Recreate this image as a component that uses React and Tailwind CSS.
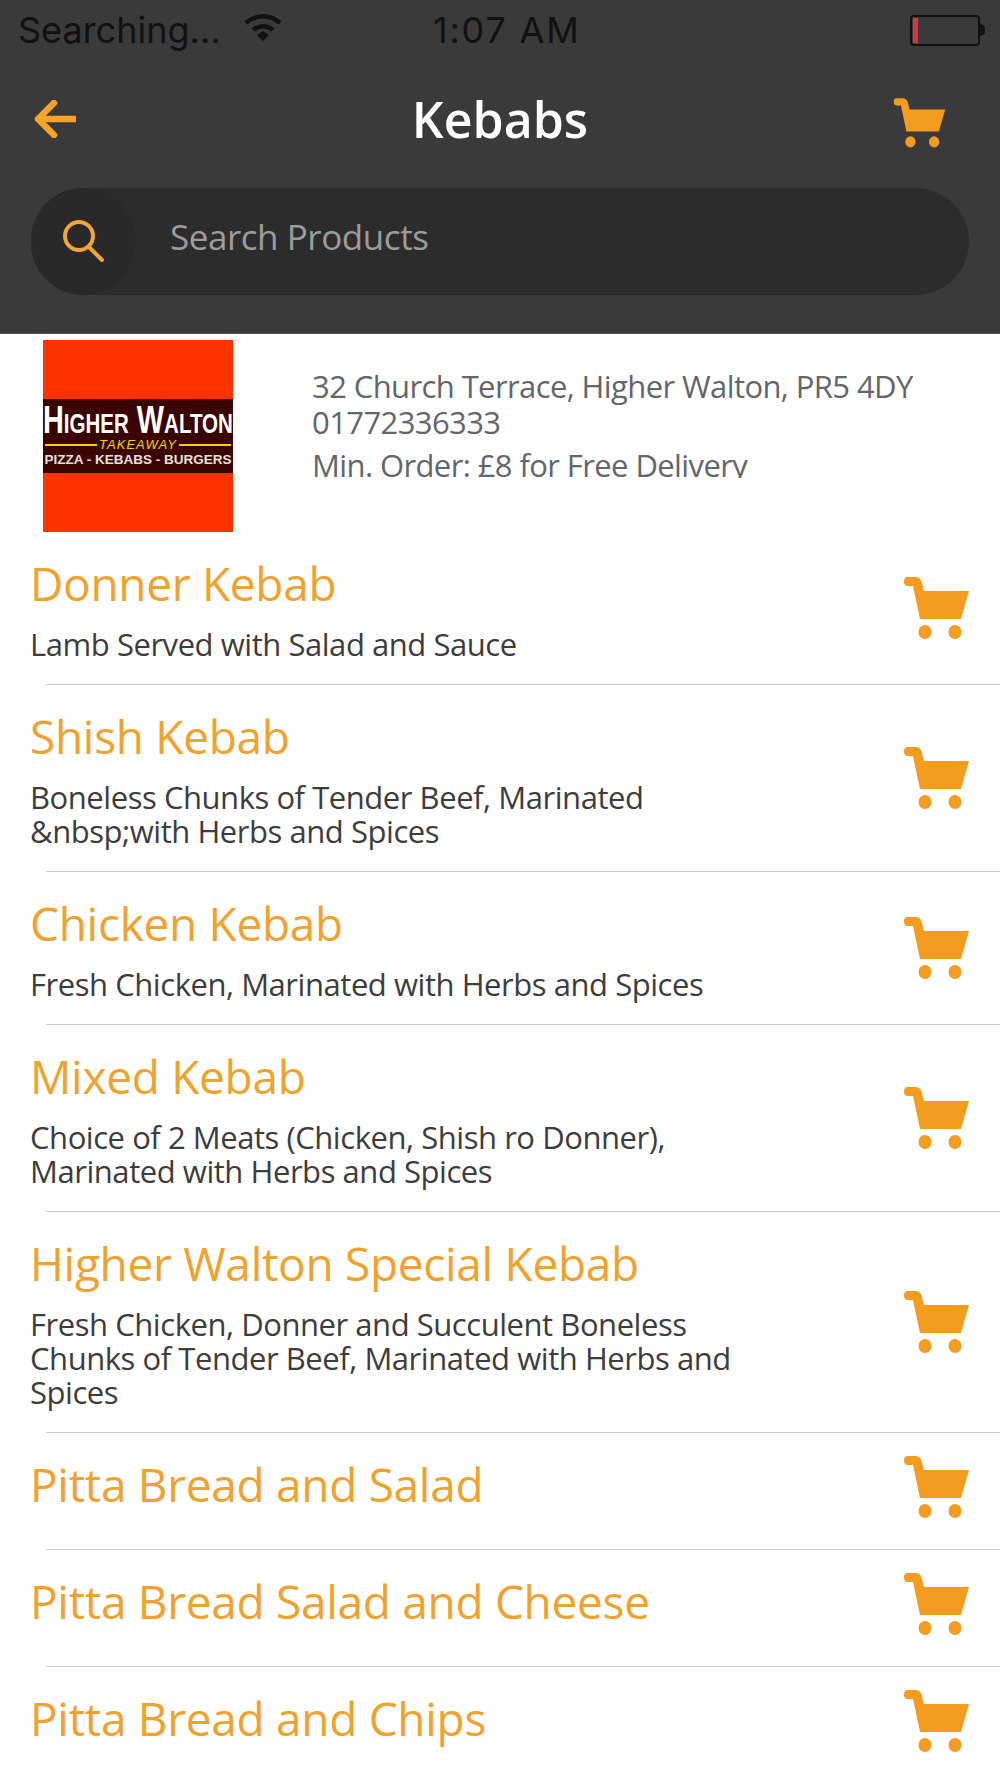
import React from "react";

const items = [
  { name: "Donner Kebab", desc: "Lamb Served with Salad and Sauce" },
  { name: "Shish Kebab", desc: "Boneless Chunks of Tender Beef, Marinated &nbsp;with Herbs and Spices" },
  { name: "Chicken Kebab", desc: "Fresh Chicken, Marinated with Herbs and Spices" },
  { name: "Mixed Kebab", desc: "Choice of 2 Meats (Chicken, Shish ro Donner), Marinated with Herbs and Spices" },
  { name: "Higher Walton Special Kebab", desc: "Fresh Chicken, Donner and Succulent Boneless Chunks of Tender Beef, Marinated with Herbs and Spices" },
  { name: "Pitta Bread and Salad" },
  { name: "Pitta Bread Salad and Cheese" },
  { name: "Pitta Bread and Chips" },
];

function Cart({ className }) {
  return (
    <svg viewBox="0 0 67 63" className={className} fill="#f39c1f">
      <path d="M4 1h8c4 0 6 2 7 6l2 8h45l-8 28H17L10 10H4C0 10 0 1 4 1z" />
      <ellipse cx="22" cy="56" rx="6.5" ry="7" />
      <ellipse cx="52" cy="56" rx="6.5" ry="7" />
    </svg>
  );
}

function Row({ item }) {
  return (
    <>
      <div className={`flex items-center justify-between pl-[30px] pr-[30px] pt-[22px] ${item.desc ? "pb-[23px]" : "pb-[31px]"}`}>
        <div className="w-[712px]">
          <div className={`h-[60px] text-[46px] tracking-[-0.3px] text-[#f0a22e] ${item.desc ? "leading-[58px]" : "leading-[54px]"}`}>{item.name}</div>
          {item.desc && (
            <div className="mt-[13px] text-[31px] leading-[34px] tracking-[-0.45px] text-[#3d3d3d]">{item.desc}</div>
          )}
        </div>
        <Cart className="h-[63px] w-[67px] shrink-0" />
      </div>
      <div className="ml-[46px] h-px bg-[#cdcdcd]"></div>
    </>
  );
}

export default function App() {
  return (
    <div className="h-[1778px] w-[1000px] overflow-hidden bg-white font-['Open_Sans',sans-serif]">
      {/* header */}
      <div className="h-[334px] bg-[#3a3a3a] border-b border-[#555]">
        <div className="relative flex h-[60px] items-center pl-[18px] pr-[15px] font-['Inter',sans-serif] text-[36px] text-[#111]">
          <span>Searching...</span>
          <svg viewBox="0 0 40 30" className="ml-[22px] mb-[6px] h-[30px] w-[40px]" fill="none" stroke="#111" strokeWidth="4.5">
            <path d="M3 11c10-9 24-9 34 0" />
            <path d="M10 18c6-5 14-5 20 0" />
            <path d="M14 23l6-4 6 4-6 6z" fill="#111" stroke="none" />
          </svg>
          <span className="absolute left-[433px] tracking-[1.8px]">1:07 AM</span>
          <div className="ml-auto flex items-center">
            <div className="h-[31px] w-[70px] rounded-[4px] border-2 border-[#111] p-[1px]">
              <div className="h-full w-[5px] bg-[#d8333f]"></div>
            </div>
            <div className="h-[12px] w-[5px] rounded-r-full bg-[#111]"></div>
          </div>
        </div>
        <div className="flex h-[118px] items-center justify-between pl-[34px] pr-[54px]">
          <div className="w-[73px]">
            <svg viewBox="0 0 44 38" className="h-[38px] w-[44px]" fill="none" stroke="#f7a428" strokeWidth="6.5" strokeLinecap="round" strokeLinejoin="round">
              <path d="M20 3L4 19l16 16" />
              <path d="M6 19h36" strokeLinecap="butt" />
            </svg>
          </div>
          <div className="text-[50px] font-semibold text-white">Kebabs</div>
          <Cart className="mt-[6px] h-[53px] w-[53px]" />
        </div>
        <div className="mx-[31px] mt-[10px] flex h-[107px] items-center rounded-full bg-[#2c2c2c]">
          <div className="flex h-[107px] w-[104px] items-center justify-center rounded-full bg-[#292929]">
            <svg viewBox="0 0 44 44" className="mb-[4px] h-[44px] w-[44px]" fill="none" stroke="#f3a637" strokeWidth="4">
              <circle cx="18" cy="18" r="14" />
              <path d="M28 29l13 13" strokeLinecap="round" />
            </svg>
          </div>
          <div className="mb-[9px] ml-[35px] text-[35px] tracking-[-0.45px] text-[#9c9c9c]">Search Products</div>
        </div>
      </div>

      {/* shop info */}
      <div className="flex h-[198px]">
        <div className="ml-[43px] mt-[6px] flex h-[192px] w-[190px] flex-col justify-center bg-[#ff3300]">
          <div className="flex h-[74px] flex-col items-center overflow-hidden bg-[#3a0500] font-['Liberation_Sans',sans-serif]">
            <div className="mt-[3px] h-[36px] scale-x-[.76] whitespace-nowrap text-[38px] font-bold leading-[36px] text-white [font-variant:small-caps]">Higher Walton</div>
            <div className="flex h-[14px] w-full items-center gap-[2px] px-[2px]">
              <div className="h-[2px] flex-1 bg-[#e8d800]"></div>
              <div className="text-[13px] italic leading-[14px] tracking-[1px] text-[#e8d800]">TAKEAWAY</div>
              <div className="h-[2px] flex-1 bg-[#e8d800]"></div>
            </div>
            <div className="mt-[1px] whitespace-nowrap text-[13.5px] font-bold leading-[14px] text-[#e8e0d8]">PIZZA - KEBABS - BURGERS</div>
          </div>
        </div>
        <div className="ml-[79px] mt-[34px] h-[110px] overflow-hidden text-[31px] tracking-[-0.6px] text-[#63666a]">
          <div className="h-[36px] leading-[36px]">32 Church Terrace, Higher Walton, PR5 4DY</div>
          <div className="h-[36px] leading-[36px]">01772336333</div>
          <div className="mt-[7px] h-[36px] leading-[36px]">Min. Order: £8 for Free Delivery</div>
        </div>
      </div>

      {items.map((item) => (
        <Row key={item.name} item={item} />
      ))}
    </div>
  );
}
